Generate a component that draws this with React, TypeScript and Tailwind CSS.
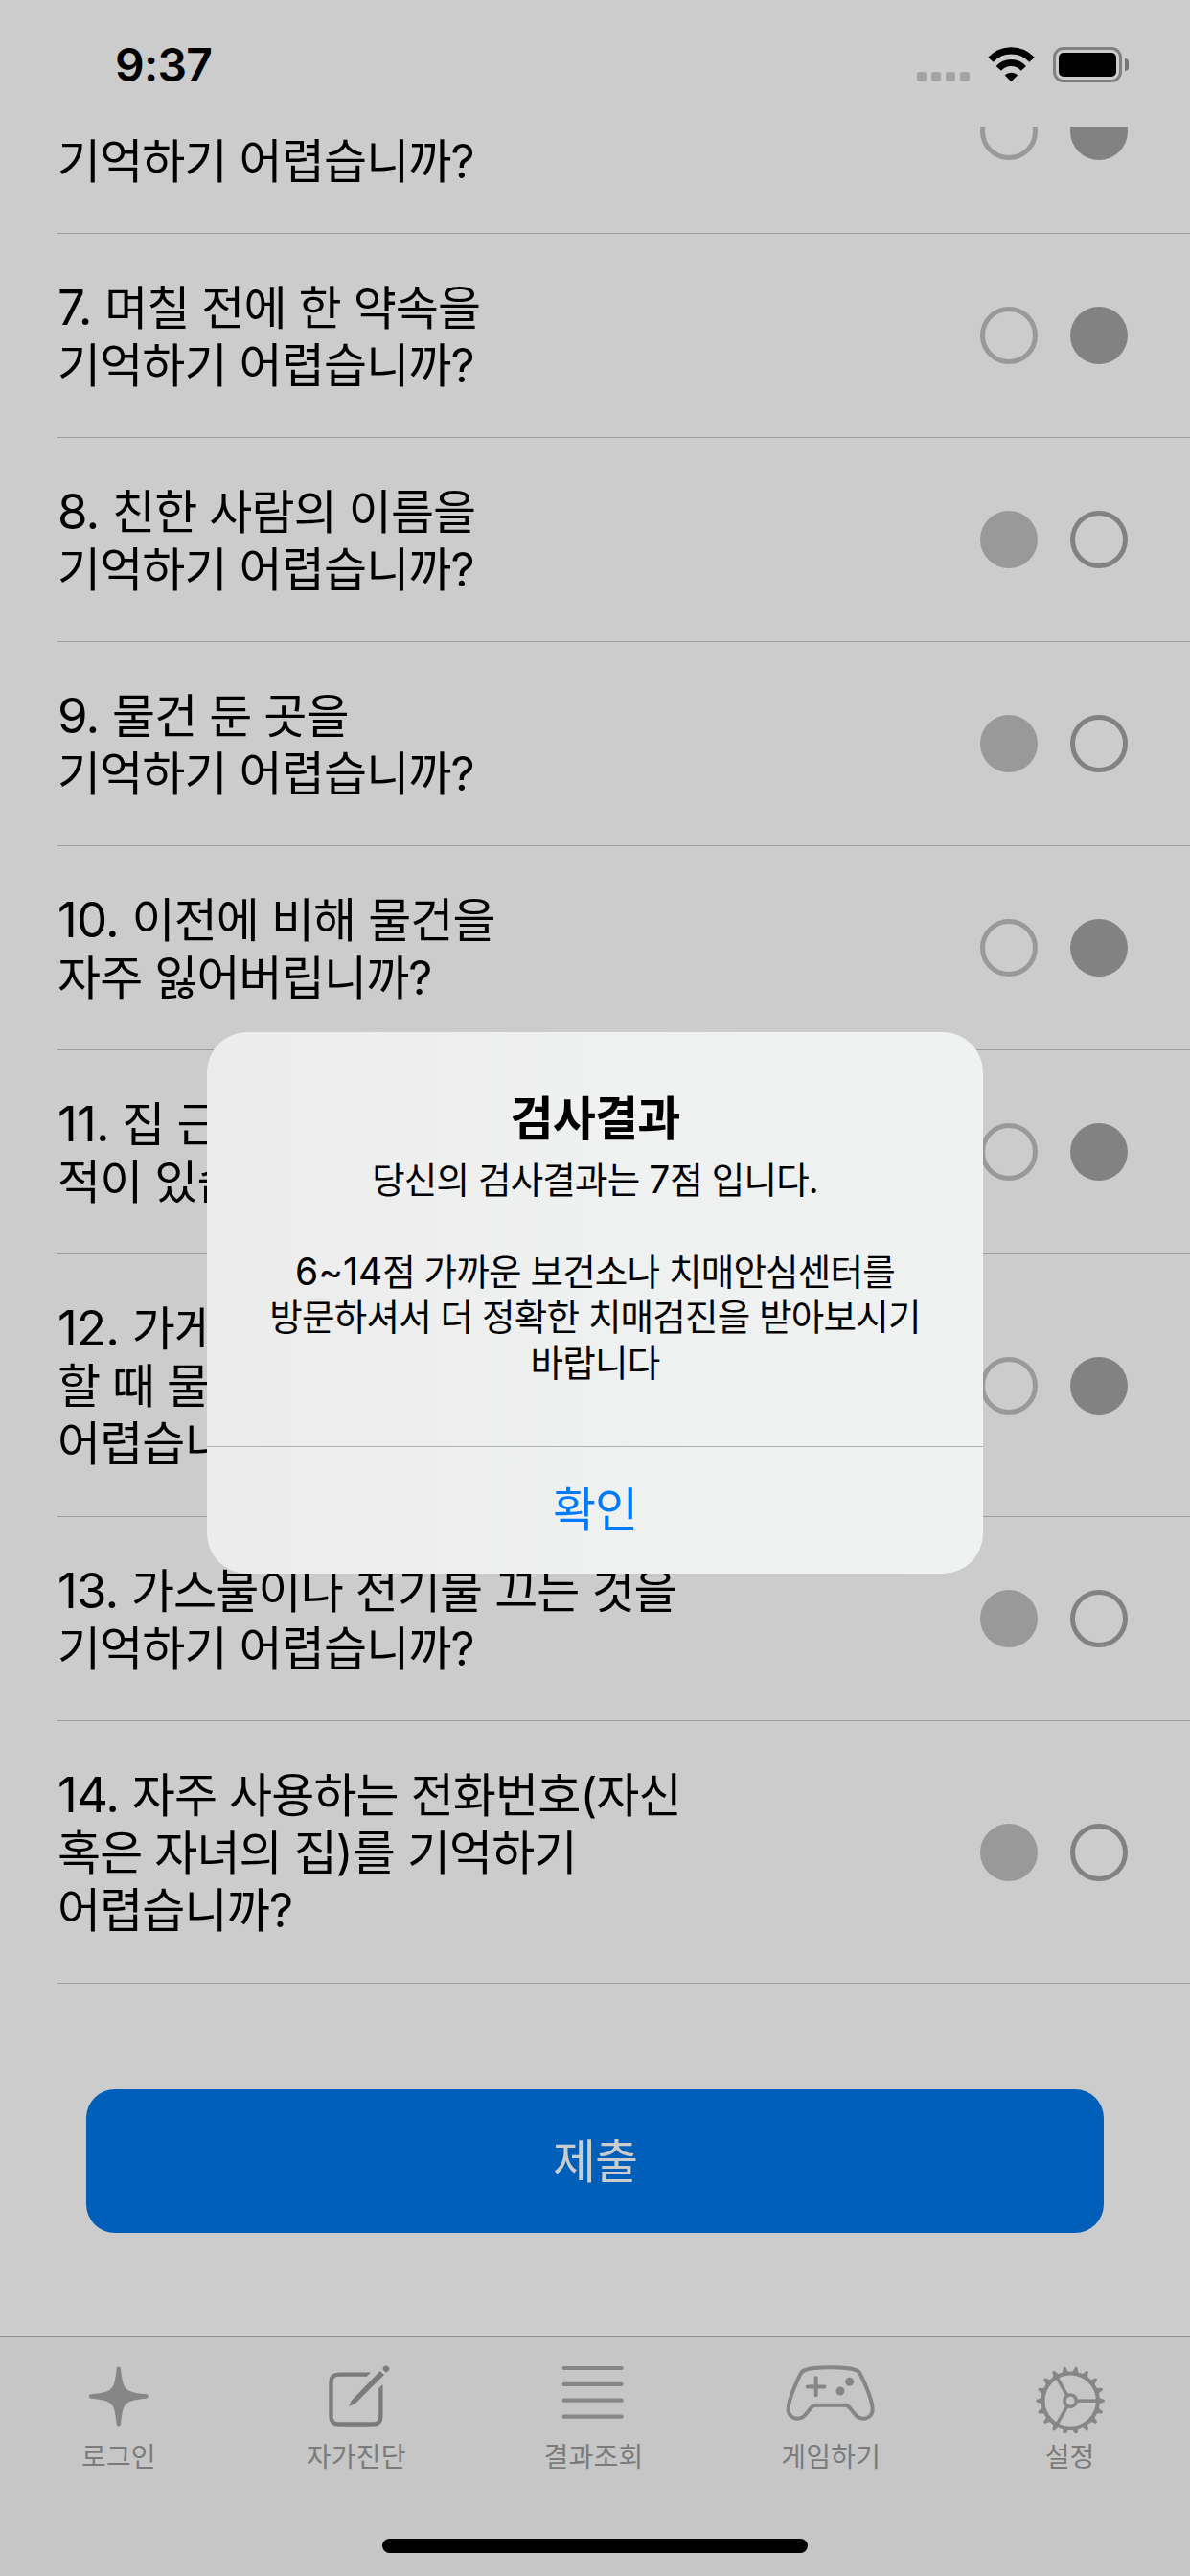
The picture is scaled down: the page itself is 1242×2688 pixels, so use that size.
import React from "react";

type Answer = "yes" | "no";

const questions: { no?: string; lines: string[]; answer: Answer }[] = [
  { lines: ["\u00a0", "기억하기 어렵습니까?"], answer: "no" },
  { no: "7. ", lines: ["며칠 전에 한 약속을", "기억하기 어렵습니까?"], answer: "no" },
  { no: "8. ", lines: ["친한 사람의 이름을", "기억하기 어렵습니까?"], answer: "yes" },
  { no: "9. ", lines: ["물건 둔 곳을", "기억하기 어렵습니까?"], answer: "yes" },
  { no: "10. ", lines: ["이전에 비해 물건을", "자주 잃어버립니까?"], answer: "no" },
  { no: "11. ", lines: ["집 근처에서 길을 잃은", "적이 있습니까?"], answer: "no" },
  { no: "12. ", lines: ["가게에서 사려고", "할 때 물건 이름을 기억하기", "어렵습니까?"], answer: "no" },
  { no: "13. ", lines: ["가스불이나 전기불 끄는 것을", "기억하기 어렵습니까?"], answer: "yes" },
  { no: "14. ", lines: ["자주 사용하는 전화번호(자신", "혹은 자녀의 집)를 기억하기", "어렵습니까?"], answer: "yes" },
];

function StatusBar() {
  return (
    <header className="flex h-[132px] shrink-0 items-start justify-between pl-[120px] pr-[64px] text-black">
      <span className="mt-[38px] text-[48px] leading-[60px] font-semibold tracking-[-0.8px]">9:37</span>
      <div className="mt-[49px] flex h-[37px] items-start">
        <div className="mt-[26px] flex gap-[5px]">
          {[0, 1, 2, 3].map((i) => (
            <span key={i} className="size-[10px] rounded-[3px] bg-[#a3a3a3]" />
          ))}
        </div>
        <svg className="ml-[19px] h-[37px] w-[49px]" viewBox="393 147 147 111">
          <path d="M402 187A87 87 0 0 1 531 187" fill="none" stroke="#000" strokeWidth="22" />
          <path d="M427 214A52 52 0 0 1 505 214" fill="none" stroke="#000" strokeWidth="21" />
          <path d="M466 256L446 235A30 30 0 0 1 487 235Z" />
        </svg>
        <div className="ml-[19px] h-[37px] w-[72px] rounded-[11px] border-[3px] border-[#808080] p-[3px]">
          <div className="h-[25px] w-[60px] rounded-[5px] bg-black" />
        </div>
        <span className="mt-[12px] ml-[3px] h-[13px] w-[4px] rounded-r-full bg-[#757575]" />
      </div>
    </header>
  );
}

function Row({ no, lines, answer }: { no?: string; lines: string[]; answer: Answer }) {
  return (
    <li
      className={
        lines.length === 3
          ? "ml-[60px] flex h-[274px] items-center border-b border-[#9d9d9d] pr-[65px]"
          : "ml-[60px] flex h-[213px] items-center border-b border-[#9d9d9d] pr-[65px]"
      }
    >
      <div className="flex-1 pt-[3px] text-[49px] leading-[60.5px] tracking-[-0.9px] whitespace-nowrap text-black">
        {lines.map((line, i) => (
          <p key={i} className="h-[60.5px]">
            {i === 0 && no && (
              <span className="text-[51px] tracking-[-0.8px] whitespace-pre">{no}</span>
            )}
            {line}
          </p>
        ))}
      </div>
      <div className="flex gap-[34px]">
        <span
          className={
            answer === "yes"
              ? "size-[60px] rounded-full bg-[#999999]"
              : "size-[60px] rounded-full border-[5px] border-[#999999]"
          }
        />
        <span
          className={
            answer === "no"
              ? "size-[60px] rounded-full bg-[#828282]"
              : "size-[60px] rounded-full border-[5px] border-[#828282]"
          }
        />
      </div>
    </li>
  );
}

const teeth = Array.from({ length: 18 }, (_, i) => i * 20);

const tabs: { label: string; icon: React.ReactNode }[] = [
  {
    label: "로그인",
    icon: (
      <svg className="h-[100px] w-[100px]" viewBox="220 55 300 300" fill="#868686">
        <path
          transform="translate(369.5 239.5)"
          d="M-6.500-87C-6-95 6-95 6.500-87C11-42 16-31 24-24C31-16 42-11 87-6.500C95-6 95 6 87 6.500C42 11 31 16 24 24C16 31 11 42 6.500 87C6 95-6 95-6.500 87C-11 42-16 31-24 24C-31 16-42 11-87 6.500C-95 6-95-6-87-6.500C-42-11-31-16-24-24C-16-31-11-42-6.500-87Z"
        />
      </svg>
    ),
  },
  {
    label: "자가진단",
    icon: (
      <svg className="h-[100px] w-[100px]" viewBox="965 55 300 300" fill="#7b7b7b">
        <path
          d="M1148 171H1060Q1035.500 171 1035.500 195V303Q1035.500 326.500 1060 326.500H1167Q1191 326.500 1191 303V215"
          fill="none"
          stroke="#7b7b7b"
          strokeWidth="13"
        />
        <path d="M1147 164.500H1161L1147 177.500ZM1197.500 202V216H1184.500V215Z" />
        <path d="M1091 270L1099 253L1189 160L1202 172L1114 260L1105 266Z" />
        <path d="M1197 155L1200 147Q1208 140 1215 147Q1222 154 1214 161L1207 165Z" />
      </svg>
    ),
  },
  {
    label: "결과조회",
    icon: (
      <svg className="h-[100px] w-[100px]" viewBox="208 55 300 300">
        <path
          d="M267 151H447M267 201.500H447M267 252H447M267 303H447"
          stroke="#868686"
          strokeWidth="12.500"
          strokeLinecap="round"
        />
      </svg>
    ),
  },
  {
    label: "게임하기",
    icon: (
      <svg className="h-[100px] w-[100px]" viewBox="952 55 300 300" fill="none" stroke="#868686" strokeWidth="12">
        <path d="M1101 149C1060 149 1037 151 1022 157Q1012 160 1007 170C990 205 969 250 969 281C969 298 982 309 998 309C1008 309 1016 305 1022 298L1041 275Q1047 267 1055 267H1147Q1155 267 1161 275L1180 298C1186 305 1194 309 1204 309C1220 309 1233 298 1233 281C1233 250 1212 205 1195 170Q1190 160 1180 157C1165 151 1142 149 1101 149Z" />
        <path d="M1029 209.500H1082M1056 182V236" strokeLinecap="round" />
        <circle cx="1161" cy="194" r="13.500" fill="#868686" stroke="none" />
        <circle cx="1132" cy="223" r="13.500" fill="#868686" stroke="none" />
      </svg>
    ),
  },
  {
    label: "설정",
    icon: (
      <svg className="h-[100px] w-[100px]" viewBox="320 55 300 300">
        <g transform="translate(470.500 253.500)" fill="none" stroke="#868686">
          <circle r="86" strokeWidth="12.500" />
          <circle r="18.500" strokeWidth="11" />
          {[0, 120, 240].map((a) => (
            <path key={a} d="M22 0H84" strokeWidth="10.500" transform={`rotate(${a})`} />
          ))}
          {teeth.map((a) => (
            <path
              key={a}
              d="M88-11L96-7L106-4Q109 0 106 4L96 7L88 11Z"
              fill="#868686"
              stroke="none"
              transform={`rotate(${a})`}
            />
          ))}
        </g>
      </svg>
    ),
  },
];

function TabBar() {
  return (
    <footer className="flex h-[250px] shrink-0 flex-col items-center border-t border-[#8c8c8c] bg-[#c6c6c6]">
      <nav className="grid w-full grid-cols-5 pr-[3px]">
        {tabs.map((tab) => (
          <div key={tab.label} className="flex flex-col items-center last:pl-[3px]">
            {tab.icon}
            <span className="mt-[5px] text-[28px] leading-[40px] tracking-[0.2px] text-[#7b7b7b]">{tab.label}</span>
          </div>
        ))}
      </nav>
      <div className="mt-[65px] h-[15px] w-[444px] rounded-full bg-black" />
    </footer>
  );
}

function Num({ children }: { children: React.ReactNode }) {
  return <span className="text-[39px] tracking-[0px]">{children}</span>;
}

function ResultDialog() {
  return (
    <div
      role="dialog"
      className="absolute top-[1077px] left-[216px] flex h-[565px] w-[810px] flex-col overflow-hidden rounded-[42px] bg-linear-to-r from-[#ececec] via-[#eff0f0] to-[#f0f2f1] text-center text-black"
    >
      <div className="flex-1 pt-[61px]">
        <h2 className="text-[49px] leading-[60px] font-bold tracking-[-0.8px]">검사결과</h2>
        <div className="mt-[9px] text-[37.5px] leading-[48px] tracking-[-0.8px] *:h-[48px]">
          <p>
            당신의 검사결과는 <Num>7</Num>점 입니다.
          </p>
          <p>&nbsp;</p>
          <p>
            <Num>6~14</Num>점 가까운 보건소나 치매안심센터를
          </p>
          <p>방문하셔서 더 정확한 치매검진을 받아보시기</p>
          <p>바랍니다</p>
        </div>
      </div>
      <button className="h-[133px] border-t border-[#b0b1b1] text-[49px] tracking-[-1px] text-[#007aff]">확인</button>
    </div>
  );
}

export default function App() {
  return (
    <div className="relative flex h-[2688px] w-[1242px] flex-col overflow-hidden bg-[#cccccc] font-['Inter','Noto_Sans_CJK_KR',sans-serif]">
      <StatusBar />
      <main className="flex-1 overflow-hidden">
        <ul className="mt-[-101px]">
          {questions.map((q, i) => (
            <Row key={i} no={q.no} lines={q.lines} answer={q.answer} />
          ))}
        </ul>
        <div className="px-[90px] pt-[110px]">
          <button className="h-[150px] w-full rounded-[30px] bg-[#005fb8] pt-[2px] text-[49px] tracking-[-1.2px] text-[#cccccc]">
            제출
          </button>
        </div>
      </main>
      <TabBar />
      <ResultDialog />
    </div>
  );
}
